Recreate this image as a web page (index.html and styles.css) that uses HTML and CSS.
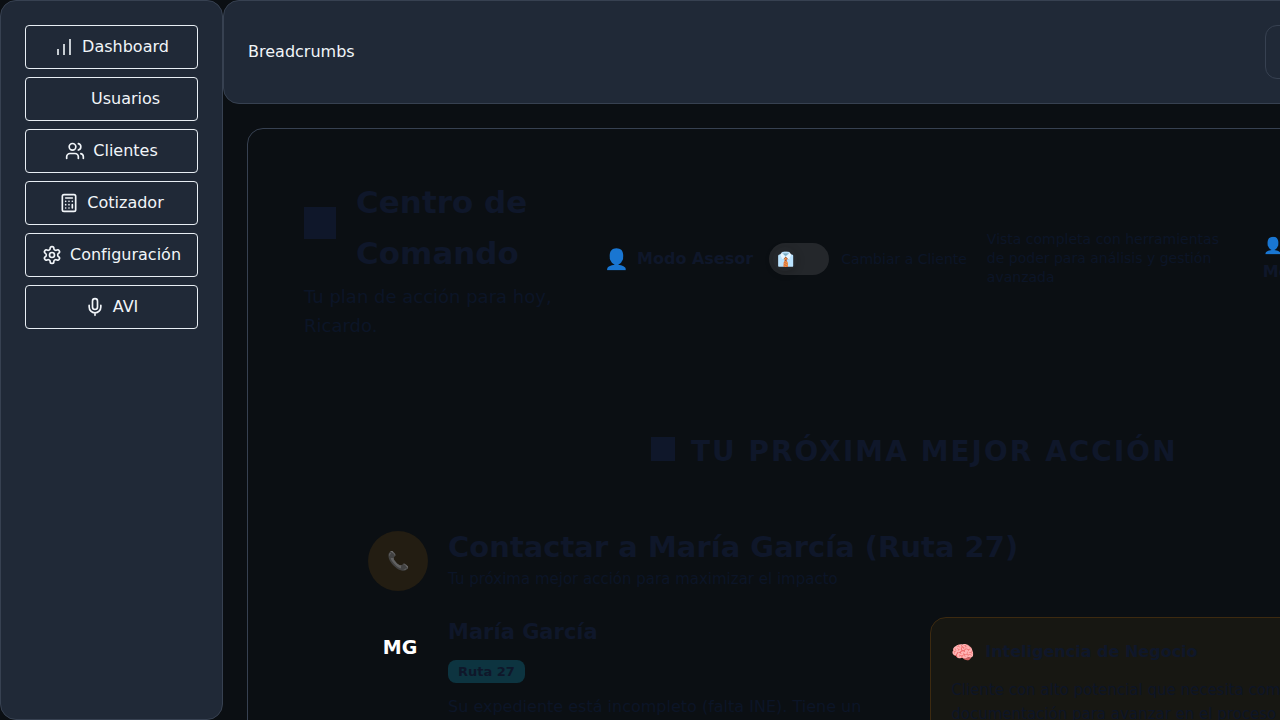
FILE: index.html
```html
<!DOCTYPE html>
<html lang="es">
<head>
<meta charset="utf-8">
<title>Centro de Comando</title>
<link rel="stylesheet" href="styles.css">
</head>
<body>
<div class="app">
  <nav class="sidebar" aria-label="Principal">
    <button class="nav-btn" type="button">
      <svg class="icon icon-bars" viewBox="0 0 20 20"><path d="M4 12v6M10 7v11M16 2v16"/></svg>
      <span>Dashboard</span>
    </button>
    <button class="nav-btn" type="button">
      <svg class="icon" viewBox="0 0 24 24"></svg>
      <span>Usuarios</span>
    </button>
    <button class="nav-btn" type="button">
      <svg class="icon" viewBox="0 0 24 24"><path d="M16 21v-2a4 4 0 0 0-4-4H6a4 4 0 0 0-4 4v2"/><circle cx="9" cy="7" r="4"/><path d="M22 21v-2a4 4 0 0 0-3-3.87M16 3.13a4 4 0 0 1 0 7.75"/></svg>
      <span>Clientes</span>
    </button>
    <button class="nav-btn" type="button">
      <svg class="icon" viewBox="0 0 24 24"><rect x="4" y="2" width="16" height="20" rx="2"/><path d="M8 6h8M16 14v4M16 10h.01M12 10h.01M8 10h.01M12 14h.01M8 14h.01M12 18h.01M8 18h.01"/></svg>
      <span>Cotizador</span>
    </button>
    <button class="nav-btn" type="button">
      <svg class="icon" viewBox="0 0 24 24"><path d="M12.22 2h-.44a2 2 0 0 0-2 2v.18a2 2 0 0 1-1 1.73l-.43.25a2 2 0 0 1-2 0l-.15-.08a2 2 0 0 0-2.73.73l-.22.38a2 2 0 0 0 .73 2.73l.15.1a2 2 0 0 1 1 1.72v.51a2 2 0 0 1-1 1.74l-.15.09a2 2 0 0 0-.73 2.73l.22.38a2 2 0 0 0 2.73.73l.15-.08a2 2 0 0 1 2 0l.43.25a2 2 0 0 1 1 1.73V20a2 2 0 0 0 2 2h.44a2 2 0 0 0 2-2v-.18a2 2 0 0 1 1-1.73l.43-.25a2 2 0 0 1 2 0l.15.08a2 2 0 0 0 2.73-.73l.22-.39a2 2 0 0 0-.73-2.73l-.15-.08a2 2 0 0 1-1-1.74v-.5a2 2 0 0 1 1-1.74l.15-.09a2 2 0 0 0 .73-2.73l-.22-.38a2 2 0 0 0-2.73-.73l-.15.08a2 2 0 0 1-2 0l-.43-.25a2 2 0 0 1-1-1.73V4a2 2 0 0 0-2-2z"/><circle cx="12" cy="12" r="3"/></svg>
      <span>Configuración</span>
    </button>
    <button class="nav-btn" type="button">
      <svg class="icon" viewBox="0 0 24 24"><rect x="9" y="2" width="6" height="13" rx="3"/><path d="M19 10v2a7 7 0 0 1-14 0v-2M12 19v3"/></svg>
      <span>AVI</span>
    </button>
  </nav>

  <div class="workspace">
    <header class="topbar">
      <div>Breadcrumbs</div>
      <div class="topbar-box"></div>
    </header>

    <main class="panel">
      <div class="hero">
        <div class="hero-title">
          <h1 class="title"><span class="title-mark"></span><span>Centro de Comando</span></h1>
          <p class="subtitle">Tu plan de acción para hoy, Ricardo.</p>
        </div>
        <div class="mode">
          <span class="mode-emoji">👤</span>
          <span class="mode-name" id="mode-name">Modo Asesor</span>
          <button class="switch" type="button" role="switch" aria-checked="false" aria-labelledby="mode-name"><span class="knob">👔</span></button>
          <span class="mode-hint">Cambiar a Cliente</span>
          <p class="mode-text">Vista completa con herramientas de poder para análisis y gestión avanzada</p>
        </div>
        <div class="mode-badge"><span>👤</span><span>Modo Asesor</span></div>
      </div>

      <section class="next">
        <h2 class="next-heading"><span class="next-mark"></span><span>TU PRÓXIMA MEJOR ACCIÓN</span></h2>
        <div class="card">
          <div class="card-head">
            <div class="call">📞</div>
            <div>
              <h3 class="card-title">Contactar a María García (Ruta 27)</h3>
              <p class="card-sub">Tu próxima mejor acción para maximizar el impacto</p>
            </div>
          </div>
          <div class="card-body">
            <div class="client">
              <div class="avatar">MG</div>
              <div class="client-info">
                <h4 class="client-name">María García</h4>
                <span class="route">Ruta 27</span>
                <p class="client-text">Su expediente está incompleto (falta INE). Tiene un</p>
              </div>
            </div>
            <aside class="insight">
              <h4 class="insight-title"><span class="insight-emoji">🧠</span><span>Inteligencia de Negocio</span></h4>
              <p class="insight-text">Cliente con alto potencial que necesita completar la documentación para avanzar en el proceso</p>
            </aside>
          </div>
        </div>
      </section>
    </main>
  </div>
</div>
</body>
</html>
```
FILE: styles.css
```css
* { box-sizing: border-box; }
body, h1, h2, h3, h4, p { margin: 0; }

body {
  background: #0b0f13;
  color: #0f172a;
  font: 16px/26px "DejaVu Sans", sans-serif;
  overflow: hidden;
}

.app { display: flex; height: 100vh; overflow: hidden; }

.sidebar {
  flex: none;
  display: flex;
  flex-direction: column;
  gap: 8px;
  padding: 24px;
  background: #202937;
  border: 1px solid #374151;
  border-radius: 16px;
}

.nav-btn {
  display: flex;
  align-items: center;
  justify-content: center;
  gap: 8px;
  height: 44px;
  padding: 0 16px;
  background: transparent;
  border: 1px solid #e8eef4;
  border-radius: 4px;
  color: #f1f5f9;
  font: 16px/20px "DejaVu Sans", sans-serif;
}

.icon {
  flex: none;
  width: 20px;
  height: 20px;
  fill: none;
  stroke: currentColor;
  stroke-width: 2;
  stroke-linecap: round;
  stroke-linejoin: round;
}
.icon-bars { stroke-width: 1.6; stroke-linecap: butt; }

.workspace { flex: none; width: 108vw; }

.topbar {
  display: flex;
  align-items: center;
  justify-content: space-between;
  padding: 24px;
  background: #202937;
  border: 1px solid #374151;
  border-radius: 16px;
  color: #f1f5f9;
}

.topbar-box {
  width: 315px;
  height: 54px;
  border: 1px solid #374151;
  border-radius: 12px;
}

.panel {
  margin: 24px;
  padding: 48px 56px;
  border: 1px solid #374151;
  border-radius: 16px;
}

.hero { display: flex; align-items: center; }
.hero-title { flex: none; width: 300px; padding-right: 48px; }

.title {
  display: flex;
  align-items: center;
  gap: 20px;
  font-size: 31px;
  line-height: 51px;
}
.title-mark { flex: none; width: 32px; height: 32px; margin-bottom: 10px; background: #0f172a; }
.subtitle { margin-top: 3px; font-size: 18px; line-height: 29px; color: #0c1527; }

.mode { flex: none; display: flex; align-items: center; }
.mode-emoji { margin-right: 8px; font-size: 20px; }
.mode-name { margin-right: 16px; font-weight: 700; }

.switch {
  width: 60px;
  height: 32px;
  margin-right: 12px;
  padding: 4px;
  border: 0;
  border-radius: 16px;
  background: #24272b;
}
.knob {
  display: flex;
  align-items: center;
  justify-content: center;
  width: 24px;
  height: 24px;
  border-radius: 50%;
  box-shadow: 0 2px 8px rgba(0, 0, 0, 0.2);
  font-size: 14px;
  line-height: 20px;
}
.mode-hint { margin-right: 20px; font-size: 14px; color: #0c1527; }
.mode-text { width: 240px; font-size: 14px; line-height: 19px; color: #0c1527; }

.mode-badge {
  display: flex;
  flex-direction: column;
  margin-left: 36px;
  font-weight: 700;
  white-space: nowrap;
}

.next { padding: 89px 64px 0; }
.next-heading {
  display: flex;
  align-items: center;
  justify-content: center;
  gap: 16px;
  font-size: 28px;
  line-height: 46px;
  letter-spacing: 2px;
}
.next-mark { width: 24px; height: 24px; margin-bottom: 6px; background: #0f172a; }

.card { margin-top: 54px; }
.card-head { display: flex; align-items: center; gap: 20px; }
.call {
  display: flex;
  align-items: center;
  justify-content: center;
  width: 60px;
  height: 60px;
  border-radius: 50%;
  background: #231d12;
  font-size: 18px;
}
.card-title { font-size: 29px; line-height: 36px; }
.card-sub { font-size: 15px; line-height: 28px; color: #0c1527; }

.card-body {
  display: grid;
  grid-template-columns: 1fr 1fr;
  gap: 32px;
  margin-top: 24px;
}
.client { display: flex; align-items: flex-start; gap: 16px; }
.avatar {
  width: 64px;
  color: #fff;
  font-size: 19px;
  font-weight: 700;
  line-height: 60px;
  text-align: center;
}
.client-info {
  display: flex;
  flex-direction: column;
  align-items: flex-start;
  gap: 12px;
}
.client-name { font-size: 21px; line-height: 31px; }
.route {
  padding: 0 10px;
  border-radius: 8px;
  background: #0d3440;
  font-size: 13px;
  font-weight: 700;
  line-height: 23px;
}
.client-text { line-height: 24px; color: #0c1527; }

.insight {
  padding: 20px;
  background: #171712;
  border: 1px solid #3d2a10;
  border-radius: 16px;
}
.insight-title { display: flex; align-items: center; gap: 10px; font-size: 16px; line-height: 28px; }
.insight-emoji { font-size: 19px; }
.insight-text { margin-top: 12px; font-size: 15px; line-height: 24px; color: #0d1527; }
```
